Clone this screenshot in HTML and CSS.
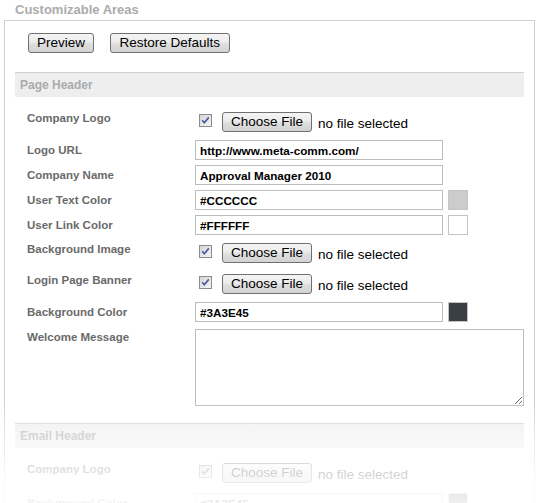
FILE: index.html
```html
<!DOCTYPE html>
<html>
<head>
<meta charset="utf-8">
<title>Customizable Areas</title>
<link rel="stylesheet" href="styles.css">
</head>
<body>
<div class="page">
  <h1 class="title">Customizable Areas</h1>
  <div class="panel">
    <div class="actions">
      <button class="btn btn-preview">Preview</button>
      <button class="btn btn-restore">Restore Defaults</button>
    </div>

    <section class="group">
      <div class="group-head">Page Header</div>
      <div class="rows">
        <div class="row row-file first">
          <div class="label label-file">Company Logo</div>
          <div class="field">
            <span class="check"><svg width="13" height="13" viewBox="0 0 13 13"><defs><linearGradient id="cg1" x1="0" y1="0" x2="1" y2="1"><stop offset="0" stop-color="#d4d4d4"/><stop offset="1" stop-color="#f6f6f6"/></linearGradient></defs><rect x="0.5" y="0.5" width="12" height="12" fill="url(#cg1)" stroke="#8c8c8c"/><path d="M3.2 6.3 L5.3 8.8 L9.8 3.4" fill="none" stroke="#4b5aa6" stroke-width="1.7"/></svg></span>
            <button class="btn btn-file">Choose File</button>
            <span class="file-name">no file selected</span>
          </div>
        </div>
        <div class="row mt8">
          <div class="label">Logo URL</div>
          <div class="field"><input class="text" type="text" value="http://www.meta-comm.com/"></div>
        </div>
        <div class="row">
          <div class="label">Company Name</div>
          <div class="field"><input class="text" type="text" value="Approval Manager 2010"></div>
        </div>
        <div class="row">
          <div class="label">User Text Color</div>
          <div class="field"><input class="text" type="text" value="#CCCCCC"><span class="swatch" style="background:#cccccc"></span></div>
        </div>
        <div class="row">
          <div class="label">User Link Color</div>
          <div class="field"><input class="text" type="text" value="#FFFFFF"><span class="swatch" style="background:#ffffff"></span></div>
        </div>
        <div class="row row-file mt8">
          <div class="label label-file">Background Image</div>
          <div class="field">
            <span class="check"><svg width="13" height="13" viewBox="0 0 13 13"><defs><linearGradient id="cg2" x1="0" y1="0" x2="1" y2="1"><stop offset="0" stop-color="#d4d4d4"/><stop offset="1" stop-color="#f6f6f6"/></linearGradient></defs><rect x="0.5" y="0.5" width="12" height="12" fill="url(#cg2)" stroke="#8c8c8c"/><path d="M3.2 6.3 L5.3 8.8 L9.8 3.4" fill="none" stroke="#4b5aa6" stroke-width="1.7"/></svg></span>
            <button class="btn btn-file">Choose File</button>
            <span class="file-name">no file selected</span>
          </div>
        </div>
        <div class="row row-file mt11">
          <div class="label label-file">Login Page Banner</div>
          <div class="field">
            <span class="check"><svg width="13" height="13" viewBox="0 0 13 13"><defs><linearGradient id="cg3" x1="0" y1="0" x2="1" y2="1"><stop offset="0" stop-color="#d4d4d4"/><stop offset="1" stop-color="#f6f6f6"/></linearGradient></defs><rect x="0.5" y="0.5" width="12" height="12" fill="url(#cg3)" stroke="#8c8c8c"/><path d="M3.2 6.3 L5.3 8.8 L9.8 3.4" fill="none" stroke="#4b5aa6" stroke-width="1.7"/></svg></span>
            <button class="btn btn-file">Choose File</button>
            <span class="file-name">no file selected</span>
          </div>
        </div>
        <div class="row mt8">
          <div class="label">Background Color</div>
          <div class="field"><input class="text" type="text" value="#3A3E45"><span class="swatch" style="background:#3a3e45"></span></div>
        </div>
        <div class="row mt7">
          <div class="label label-area">Welcome Message</div>
          <div class="field"><textarea class="area"></textarea></div>
        </div>
      </div>
    </section>

    <section class="group">
      <div class="group-head">Email Header</div>
      <div class="rows">
        <div class="row row-file first">
          <div class="label label-file">Company Logo</div>
          <div class="field">
            <span class="check"><svg width="13" height="13" viewBox="0 0 13 13"><defs><linearGradient id="cg4" x1="0" y1="0" x2="1" y2="1"><stop offset="0" stop-color="#d4d4d4"/><stop offset="1" stop-color="#f6f6f6"/></linearGradient></defs><rect x="0.5" y="0.5" width="12" height="12" fill="url(#cg4)" stroke="#8c8c8c"/><path d="M3.2 6.3 L5.3 8.8 L9.8 3.4" fill="none" stroke="#4b5aa6" stroke-width="1.7"/></svg></span>
            <button class="btn btn-file">Choose File</button>
            <span class="file-name">no file selected</span>
          </div>
        </div>
        <div class="row mt10">
          <div class="label">Background Color</div>
          <div class="field"><input class="text" type="text" value="#3A3E45"><span class="swatch" style="background:#3a3e45"></span></div>
        </div>
      </div>
    </section>
  </div>
  <div class="fade"></div>
</div>
</body>
</html>
```
FILE: styles.css
```css
* { box-sizing: border-box; }
html, body { margin: 0; padding: 0; background: #fff; }
body { font-family: "Liberation Sans", Arial, sans-serif; }

.page {
  position: relative;
  height: 503px;
  overflow: hidden;
}

.title {
  margin: 0;
  padding: 2px 0 3px 15px;
  font-size: 13px;
  line-height: 15px;
  font-weight: bold;
  color: #ababab;
}

.panel {
  margin-left: 4px;
  width: 531px;
  border: 1px solid #cfcfcf;
  border-bottom: none;
  padding: 12px 10px 0 10px;
  min-height: 600px;
}

.actions {
  display: flex;
  gap: 16px;
  padding-left: 13px;
  margin-bottom: 19px;
}

.btn {
  height: 20px;
  margin: 0;
  padding: 0 9px;
  border: 1px solid #707070;
  border-radius: 3px;
  background: linear-gradient(#f4f4f4 0%, #ececec 45%, #dedede 55%, #d2d2d2 100%);
  font-family: "Liberation Sans", Arial, sans-serif;
  font-size: 13.5px;
  line-height: 18px;
  color: #000;
}
.btn-preview { padding: 0 8px; }
.btn-restore { padding: 0 8.5px; }

.group-head {
  height: 25px;
  border-top: 1px solid #d0d0d0;
  background: #eeeeee;
  padding-left: 5px;
  font-size: 12px;
  line-height: 24px;
  font-weight: bold;
  color: #ababab;
}

.rows {
  display: flex;
  flex-direction: column;
  padding: 15px 0 17px 12px;
}

.row {
  display: grid;
  grid-template-columns: 168px auto;
  margin-top: 5px;
}
.row.first { margin-top: 0; }
.row.mt7 { margin-top: 7px; }
.row.mt8 { margin-top: 8px; }
.row.mt10 { margin-top: 10px; }
.row.mt11 { margin-top: 11px; }

.label {
  font-size: 11.5px;
  line-height: 20px;
  font-weight: bold;
  color: #6a6a6a;
  white-space: nowrap;
}
.label-file { line-height: 13px; }
.label-area { line-height: 17px; }

.field {
  display: flex;
  align-items: flex-start;
}

.row-file .field { height: 20px; }

.check {
  display: block;
  width: 13px;
  height: 13px;
  margin: 2px 0 0 4px;
}
.check svg { display: block; }

.btn-file {
  margin-left: 10px;
  padding: 0 8px;
}

.file-name {
  margin-left: 6px;
  padding-top: 2px;
  font-size: 13.5px;
  line-height: 20px;
  color: #000;
  white-space: nowrap;
}

.text {
  width: 248px;
  height: 20px;
  margin: 0;
  padding: 0 4px;
  border: 1px solid #bdbdbd;
  font-family: "Liberation Sans", Arial, sans-serif;
  font-size: 11.7px;
  font-weight: bold;
  color: #000;
  background: #fff;
  outline: none;
}

.swatch {
  display: block;
  width: 20px;
  height: 20px;
  margin-left: 5px;
  border: 1px solid #c4c4c4;
}

.area {
  display: block;
  width: 329px;
  height: 77px;
  margin: 0;
  border: 1px solid #bdbdbd;
  background: #fff;
  font-family: "Liberation Sans", Arial, sans-serif;
  font-size: 12px;
}

.fade {
  position: absolute;
  left: 0;
  right: 0;
  top: 400px;
  bottom: 0;
  background: linear-gradient(rgba(255,255,255,0) 0px, rgba(255,255,255,0.5) 35px, rgba(255,255,255,0.8) 70px, rgba(255,255,255,0.92) 103px);
  pointer-events: none;
}
```
